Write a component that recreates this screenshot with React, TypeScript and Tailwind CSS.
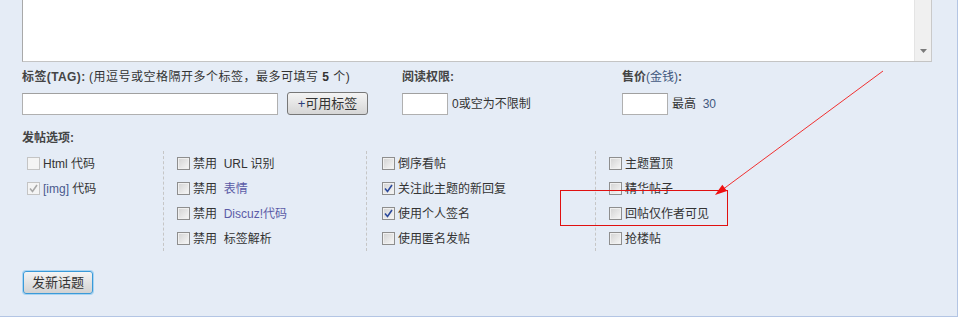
import React from 'react';

const font = { fontFamily: '"Liberation Sans", "Noto Sans CJK SC", sans-serif' };

const Check: React.FC<{ checked?: boolean; disabled?: boolean }> = ({ checked, disabled }) => (
  <span
    className={`inline-flex items-center justify-center w-[13px] h-[13px] shrink-0 border ${
      disabled
        ? 'border-[#c4c4c4] bg-[#f4f4f4]'
        : 'border-[#8e8e8e] bg-gradient-to-br from-[#d2d2d2] to-[#f8f8f8] shadow-[inset_0_0_0_1px_#f0f0f0]'
    }`}
  >
    {checked && (
      <svg width="9" height="9" viewBox="0 0 9 9">
        <path
          d="M1 4.5 L3.5 7.5 L8 1"
          fill="none"
          stroke={disabled ? '#a8a8a8' : '#2c4a9c'}
          strokeWidth="1.6"
        />
      </svg>
    )}
  </span>
);

const Opt: React.FC<{ checked?: boolean; disabled?: boolean; children: React.ReactNode }> = ({
  checked,
  disabled,
  children,
}) => (
  <div className="h-[25px] flex items-center gap-[3px] whitespace-nowrap">
    <Check checked={checked} disabled={disabled} />
    <span>{children}</span>
  </div>
);

const link = 'text-[#5b5ba6]';

const App: React.FC = () => {
  return (
    <div className="w-[975px] h-[321px] bg-white text-[12px] text-[#333]" style={font}>
      <div className="relative w-[958px] h-[317px] bg-[#e5ecf6] border-r border-b border-[#b3c5e4] pl-[22px]">
        {/* Editor textarea (top cut off) */}
        <div className="w-[910px] h-[62px] bg-white border-l border-r border-b border-l-[#a9a9a9] border-r-[#c9c9c9] border-b-[#c4c4c4] flex justify-end">
          <div className="w-[17px] h-full bg-[#f0f0f0] border-l border-[#e4e4e4] flex items-end justify-center pb-[7px]">
            <svg width="7" height="5" viewBox="0 0 7 5">
              <path d="M0 0 H7 L3.5 4 Z" fill="#7a7a7a" />
            </svg>
          </div>
        </div>

        {/* Tag / read perm / price */}
        <div className="flex mt-[8px]">
          <div className="w-[380px]">
            <div className="h-[14px] leading-[14px] whitespace-nowrap">
              <b className="text-[#444] tracking-[0.4px]">标签(TAG):</b>{' '}
              <span className="tracking-[0.5px]">
                (用逗号或空格隔开多个标签，最多可填写 <b>5</b> 个)
              </span>
            </div>
            <div className="flex items-center h-[23px] mt-[8px]">
              <input className="w-[256px] h-[22px] bg-white border border-[#b0b0b0] border-t-[#a0a0a0] outline-none" />
              <button className="ml-[9px] w-[81px] h-[23px] border border-[#777] rounded-[3px] bg-gradient-to-b from-[#f4f4f4] to-[#d6d6d6] text-[#333] text-[13px]">
                <span className="text-[#2c3f7a]">+</span>可用标签
              </button>
            </div>
          </div>
          <div className="w-[220px]">
            <div className="h-[14px] leading-[14px]">
              <b className="text-[#444]">阅读权限:</b>
            </div>
            <div className="flex items-center h-[23px] mt-[8px] gap-[4px]">
              <input className="w-[46px] h-[22px] bg-white border border-[#b0b0b0] border-t-[#a0a0a0] outline-none" />
              <span>0或空为不限制</span>
            </div>
          </div>
          <div className="flex-1">
            <div className="h-[14px] leading-[14px]">
              <b className="text-[#444]">售价</b>
              <span className="text-[#42587e]">(金钱)</span>
              <b className="text-[#444]">:</b>
            </div>
            <div className="flex items-center h-[23px] mt-[8px] gap-[4px]">
              <input className="w-[46px] h-[22px] bg-white border border-[#b0b0b0] border-t-[#a0a0a0] outline-none" />
              <span>
                最高&nbsp; <span className="text-[#42587e]">30</span>
              </span>
            </div>
          </div>
        </div>

        {/* Post options */}
        <div className="mt-[16px] h-[14px] leading-[14px]">
          <b className="text-[#444]">发帖选项:</b>
        </div>
        <div className="flex mt-[6px]">
          <div className="w-[141px] pl-[5px]">
            <Opt disabled>Html 代码</Opt>
            <Opt checked disabled>
              <span className="text-[#4a5a8e]">[img]</span> 代码
            </Opt>
          </div>
          <div className="w-[203px] pl-[13px] border-l border-dashed border-[#c6c6c6]">
            <Opt>禁用 &nbsp;URL 识别</Opt>
            <Opt>
              禁用 &nbsp;<span className={link}>表情</span>
            </Opt>
            <Opt>
              禁用 &nbsp;<span className={link}>Discuz!代码</span>
            </Opt>
            <Opt>禁用 &nbsp;标签解析</Opt>
          </div>
          <div className="w-[229px] pl-[15px] border-l border-dashed border-[#c6c6c6]">
            <Opt>倒序看帖</Opt>
            <Opt checked>关注此主题的新回复</Opt>
            <Opt checked>使用个人签名</Opt>
            <Opt>使用匿名发帖</Opt>
          </div>
          <div className="w-[200px] pl-[13px] border-l border-dashed border-[#c6c6c6]">
            <Opt>主题置顶</Opt>
            <Opt>精华帖子</Opt>
            <Opt>回帖仅作者可见</Opt>
            <Opt>抢楼帖</Opt>
          </div>
        </div>

        <button className="mt-[20px] ml-[1px] w-[70px] h-[23px] border border-[#3a9ad9] rounded-[3px] bg-gradient-to-b from-[#f4f4f4] to-[#d2d2d2] shadow-[0_0_0_1px_#a9d4f2] text-[13px] text-[#333]">
          发新话题
        </button>

        {/* Annotation overlay */}
        <div className="absolute left-[560px] top-[190px] w-[168px] h-[36px] border border-[#e01010] pointer-events-none" />
        <svg className="absolute left-0 top-0 pointer-events-none" width="958" height="317">
          <line x1="883" y1="71" x2="722" y2="190" stroke="#f03030" strokeWidth="1" />
          <polygon points="715,195 727,191 722.3,184.7" fill="#f01010" />
        </svg>
      </div>
    </div>
  );
};

export default App;
